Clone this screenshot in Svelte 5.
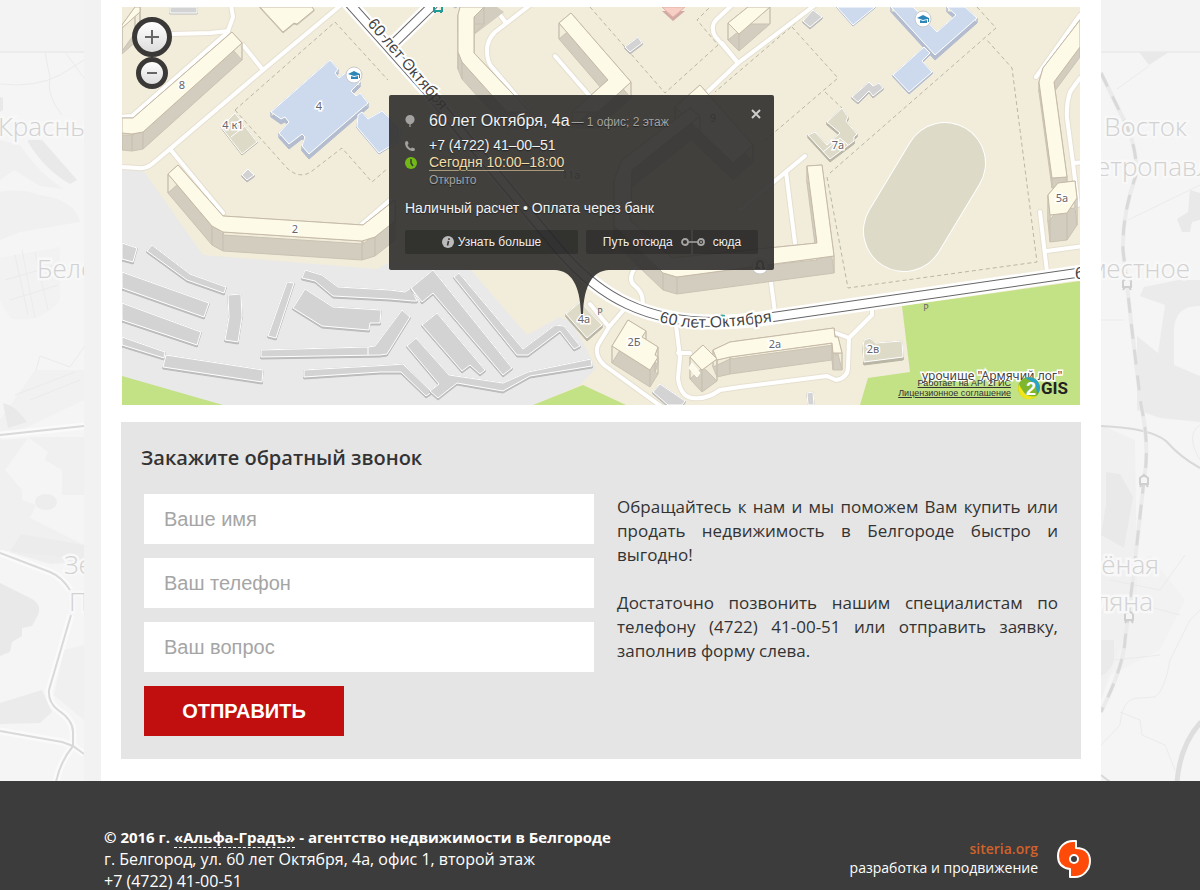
<script lang="ts">
  type Building = { kind: string; h: number; points: string };

  let name = '';
  let phone = '';
  let question = '';
  let cardOpen = true;

  const buildings: Building[] = [
    { kind: 'house', h: 26, points: '122,25 135,7 140,7 140,12 122,28' },
    { kind: 'house', h: 17, points: '232,32 242,43 143,132 132,134 122,133 122,118 133,118' },
    { kind: 'house', h: 1, points: '260,7 283,32 294,23 297,24 314,10 312,7' },
    { kind: 'house', h: 19, points: '178,165 223,216 363,225 395,200 395,221 375,237 362,241 223,232 212,226 168,174' },
    { kind: 'house', h: 17, points: '460,7 458,15 458,52 462,62 507,112 530,112 474,53 474,17 484,7' },
    { kind: 'house', h: 16, points: '571,13 631,82 598,112 572,112 608,80 559,23' },
    { kind: 'house', h: 17, points: '728,23 739,34 770,7 748,7' },
    { kind: 'house', h: 17, points: '700,85 753,145 733,163 675,107' },
    { kind: 'house', h: 17, points: '822,165 834,256 677,277 663,273 614,226 614,180 622,160 690,108 700,116 632,170 630,220 672,258 817,243 807,166' },
    { kind: 'house', h: 10, points: '1080,20 1043,68 1039,82 1052,178 1067,177 1054,82 1080,47' },
    { kind: 'house', h: 27, points: '1058,183 1075,181 1077,198 1067,213 1050,215 1048,195' },
    { kind: 'house', h: 17, points: '628,320 646,331 642,337 658,347 655,355 658,357 650,370 612,346' },
    { kind: 'house', h: 17, points: '713,350 730,342 834,328 835,337 838,337 842,353 833,353 832,343 730,357 717,360' },
    { kind: 'house', h: 22, points: '703,345 717,359 702,370 690,357' },
    { kind: 'school', h: 5, points: '330,60 338,69 335,73 339,78 348,71 360,82 351,91 356,96 360,93 368,103 309,154 302,146 305,137 302,134 289,144 279,133 289,122 285,117 281,119 271,112' },
    { kind: 'school', h: 1, points: '358,115 362,112 368,119 382,111 400,128 400,140 379,153 357,127' },
    { kind: 'school', h: 5, points: '891,7 935,55 977,18 965,7 947,7 956,15 937,32 913,7' },
    { kind: 'school', h: 2, points: '924,47 930,53 922,61 932,72 909,92 893,75' },
    { kind: 'school', h: 1, points: '837,7 853,25 875,7' },
    { kind: 'clinic', h: 4, points: '662,7 673,17 685,7' },
    { kind: 'annex', h: 1, points: '235,113 257,142 242,154 221,127' },
    { kind: 'annex', h: 3, points: '580,302 602,325 587,338 566,314' },
    { kind: 'annex', h: 3, points: '842,108 848,117 846,121 857,134 854,137 854,141 830,159 808,135 815,132 827,145 840,133 827,122' },
    { kind: 'annex', h: 3, points: '863,347 864,340 870,338 876,343 902,341 903,357 864,362' },
    { kind: 'shed', h: 1, points: '170,7 197,7 197,13 170,13' },
    { kind: 'shed', h: 2, points: '248,169 254,175 247,180 242,175' },
    { kind: 'shed', h: 2, points: '625,47 638,37 642,43 630,52' },
    { kind: 'shed', h: 2, points: '813,10 822,17 810,27 803,21' },
    { kind: 'shed', h: 2, points: '869,82 873,86 879,83 883,88 873,96 869,91 858,102 852,97' },
    { kind: 'shed', h: 2, points: '660,384 685,401 682,405 668,405 653,392' },
    { kind: 'shed', h: 1, points: '807,393 813,392 814,405 808,405' },
    { kind: 'shed', h: 2, points: '122,243 137,248 133,262 122,259' },
    { kind: 'shed', h: 2, points: '152,245 190,274 226,287 224,293 187,280 147,251' },
    { kind: 'shed', h: 2, points: '122,272 209,303 204,317 122,288' },
    { kind: 'shed', h: 2, points: '122,303 201,332 197,345 122,320' },
    { kind: 'shed', h: 2, points: '122,337 165,352 164,358 122,345' },
    { kind: 'shed', h: 2, points: '166,355 263,370 262,382 163,367' },
    { kind: 'shed', h: 2, points: '228,295 241,294 242,317 238,342 225,340 229,317' },
    { kind: 'shed', h: 2, points: '287,282 294,283 276,338 268,336' },
    { kind: 'shed', h: 2, points: '305,270 322,275 338,287 390,290 405,292 411,288 417,301 413,301 390,299 333,296 315,281 302,278' },
    { kind: 'shed', h: 2, points: '305,289 333,307 381,310 380,323 370,323 369,330 322,326 293,308' },
    { kind: 'shed', h: 2, points: '261,350 368,347 375,346 402,310 410,317 387,354 380,355 261,357' },
    { kind: 'shed', h: 2, points: '304,370 390,365 403,364 432,392 426,396 401,372 380,372 304,377' },
    { kind: 'shed', h: 2, points: '433,270 512,368 503,375 433,293 422,302 411,288' },
    { kind: 'shed', h: 2, points: '459,273 523,349 555,325 564,326 580,346 574,349 560,331 528,355 517,355 454,277' },
    { kind: 'shed', h: 2, points: '437,313 485,370 480,374 470,365 462,371 422,325' },
    { kind: 'shed', h: 2, points: '416,338 449,375 503,383 528,372 591,359 592,366 530,376 503,391 457,383 438,398 430,391 439,384 407,346' },
  ];

  const lanes = [
    'M341 5 L263 70 L170 149 L152 164 Q146 169 138 168 L120 167',
    'M243 45 L263 70',
    'M172 34 L210 33 L228 31 L233 17 L231 5',
    'M228 32 L132 116 L120 117',
    'M170 149 L223 213 M361 225 L390 200',
    'M530 5 L495 32 Q487 40 487 50 Q487 61 491 66 L530 112',
    'M495 8 L506 23',
    'M555 56 L600 108',
    'M732 5 L716 20 Q710 27 715 36 L738 63',
    'M700 99 L738 63 L815 5',
    'M722 43 L738 63',
    'M805 156 L740 210 M786 172 L795 243',
    'M770 275 L775 313',
    'M635 268 Q627 280 635 286 Q645 294 642 307',
    'M590 304 L609 327 M627 306 L609 327 L598 345 Q594 355 604 365 L662 407',
    'M676 325 L680 357 L678 378 Q680 396 692 398 Q706 400 720 390 L740 387 L827 376 L836 380 Q848 378 848 367 L849 338 L872 315 L872 306',
    'M836 333 L849 338 M678 353 L690 353',
    'M1080 78 L1070 92 Q1066 104 1067 118 L1073 163 L1078 205 M1074 163 L1084 162',
    'M1036 77 L1080 15',
    'M1040 212 L1047 272 M1047 251 L1084 246',
  ];

  const fences = [
    'M235 110 L335 22 L388 80',
    'M235 110 L287 168 Q300 180 312 171 L342 148 L372 182 L388 168',
    'M590 7 L665 93 L718 45 L697 20 L710 7',
    'M812 9 L715 92',
    'M792 27 L838 78 L762 143 M825 92 L842 108',
    'M977 7 L996 28 L830 173',
    'M827 177 L848 288 L1037 262 L1012 68 L986 39',
  ];

  const labels = [
    { text: '8', x: 182, y: 89 },
    { text: '4', x: 319, y: 110 },
    { text: '4 к1', x: 233, y: 129 },
    { text: '2', x: 295, y: 233 },
    { text: '11а', x: 571, y: 179 },
    { text: '9', x: 713, y: 122 },
    { text: '4а', x: 584, y: 323 },
    { text: '2Б', x: 634, y: 346 },
    { text: '2а', x: 775, y: 348 },
    { text: '2в', x: 873, y: 353 },
    { text: '7а', x: 838, y: 149 },
    { text: '5а', x: 1062, y: 202 },
  ];

  const mainRoad =
    'M348 2 L430 94 L556 246 Q590 287 627 304 Q665 322 715 322 Q745 322 773 317 L1090 271';

  // one quad per roof edge, dropped down by the building height
  function walls(points: string, h: number) {
    const p = points.split(' ').map((s) => s.split(',').map(Number));
    return p
      .map(([x, y], i) => {
        const [nx, ny] = p[(i + 1) % p.length];
        return `M${x} ${y}L${nx} ${ny}L${nx} ${ny + h}L${x} ${y + h}Z`;
      })
      .join('');
  }

  function handleSubmit(e: Event) {
    e.preventDefault();
    name = phone = question = '';
  }
</script>

<div class="page">
  <svg class="backdrop" viewBox="0 0 1200 781" preserveAspectRatio="xMidYMin slice" aria-hidden="true">
    <rect y="52" width="1200" height="729" fill="#f5f5f5" />
    <path d="M0 52H1200" stroke="#ececec" stroke-width="2" />
    <g fill="#f0f0f0">
      <path d="M0 140 L20 145 Q40 175 64 189 L40 186 L14 170 L0 180Z" />
      <path d="M0 192 Q20 188 40 195 Q75 200 80 222 L20 232 L0 240Z" />
      <path d="M0 258 L60 247 L60 300 Q40 325 10 318 L0 300Z" opacity=".6" />
      <path d="M35 370 H84 V400 L0 440 V420Z" opacity=".7" />
      <path d="M0 440 L28 438 L5 470 L22 490 L22 500 L36 505 L30 518 L84 545 V560 L0 550Z" />
      <path d="M28 437 H84 V495 H62 V470 L45 460 L48 452Z" />
      <path d="M64 650 L84 645 V720 L54 695Z" />
      <path d="M1101 425 L1135 440 L1137 600 L1101 700Z" />
      <path d="M1101 600 L1150 555 L1185 600 L1160 650 L1101 680Z" opacity=".6" />
    </g>
    <g fill="#e9e9e9">
      <path d="M28 140 L42 140 L77 180 L70 184 Q45 170 28 142Z" />
      <path d="M0 97 L3 98 V110 L0 112Z" />
      <path d="M3 403 Q15 405 27 422 L8 428Z" />
      <path d="M10 552 L21 534 L84 545 V562 L50 564Z" opacity=".6" />
      <ellipse cx="46" cy="502" rx="11" ry="8" opacity=".7" />
      <path d="M0 583 L32 599 Q42 605 38 615 L32 626 L22 628 L22 636 L12 642 L10 652 L0 656Z" />
      <path d="M0 703 L42 690 L52 712 L40 723 L0 724Z" opacity=".8" />
      <path d="M1139 52 H1169 L1149 65Z" />
      <path d="M1190 190 L1200 193 V220 L1192 222 L1190 232 L1182 232 L1177 219 L1188 212Z" />
      <path d="M1144 287 L1178 280 H1200 V306 Q1175 305 1174 330 V365 L1200 376 V422 L1160 418 L1137 410 L1137 336 L1158 353 L1165 305 L1140 296Z" opacity=".8" />
      <path d="M1106 472 L1120 474 L1133 497 L1124 548 L1101 535 L1106 505Z" />
      <path d="M1101 640 H1114 V660 Q1110 672 1101 676Z" opacity=".8" />
    </g>
    <g fill="none" stroke="#ebebeb">
      <path d="M45 52 L50 78 Q46 95 62 115 M0 84 Q35 88 60 75 L84 60 M65 52 L84 78" />
      <path d="M15 255 L28 315 M35 252 L48 310 M5 280 L60 264 M10 300 L58 285 M22 250 L35 318" />
      <path d="M36 370 L40 356 L70 367 L84 347 M15 395 L75 372 M30 400 L80 380" />
      <path d="M1117 89 L1149 66 M1128 220 L1200 185 M1101 320 H1125 M1200 425 Q1185 435 1200 460" />
      <path d="M1101 745 L1120 725 Q1122 697 1140 698 L1155 697 Q1165 690 1170 660 L1190 620 L1200 610" />
      <path d="M1115 660 L1160 655 M1110 580 L1160 590 L1185 555 M1125 600 L1180 615 M1120 712 L1140 720 L1142 735 L1165 745 L1175 770" />
    </g>
    <g fill="none" stroke="#fafafa" stroke-width="7">
      <path d="M0 435 L84 426 M0 553 L50 572 Q62 577 70 590 M71 615 L49 690 Q48 702 58 710 Q73 720 73 732 V746 M0 731 L62 742 L73 746 L84 754 M73 746 Q60 762 56 782" />
    </g>
    <g fill="none" stroke="#d9d9d9" stroke-width="2">
      <path d="M0 435 L84 426 M0 553 L50 572 Q62 577 70 590 M71 615 L49 690 Q48 702 58 710 Q73 720 73 732 V746 M0 731 L62 742 L73 746 L84 754 M73 746 Q60 762 56 782" />
      <path d="M1101 426 Q1150 428 1166 441 Q1180 457 1200 468 M1101 775 L1110 782" />
    </g>
    <path d="M1201 722 Q1180 745 1177 782" fill="none" stroke="#dedede" stroke-width="5" />
    <path class="rail" d="M1101 73 L1120 112 Q1138 145 1136 175 Q1122 215 1123 250 L1127 285 L1132 330 L1141 405 Q1150 445 1144 480 L1134 570 L1129 610 L1125 640 Q1124 665 1101 712" />
    <path class="rail ties" d="M1101 73 L1120 112 Q1138 145 1136 175 Q1122 215 1123 250 L1127 285 L1132 330 L1141 405 Q1150 445 1144 480 L1134 570 L1129 610 L1125 640 Q1124 665 1101 712" />
    {#each [[1127, 283], [1144, 480], [1129, 616]] as [x, y]}
      <path class="station" d="M{x - 4} {y + 4}V{y - 2}L{x} {y - 5}L{x + 4} {y - 2}V{y + 4}Z M{x - 4} {y + 7}L{x - 2} {y + 4}M{x + 4} {y + 7}L{x + 2} {y + 4}" />
    {/each}
    <g class="places">
      <text x="-2" y="136">Красный</text>
      <text x="37" y="278">Бело</text>
      <text x="64" y="574">Зел</text>
      <text x="69" y="611">По</text>
      <text x="1187" y="136" text-anchor="end">Восток</text>
      <text x="1096" y="176">етропавл</text>
      <text x="1190" y="278" text-anchor="end">местное</text>
      <text x="1159" y="574" text-anchor="end">ёная</text>
      <text x="1153" y="611" text-anchor="end">ляна</text>
    </g>
    <rect x="84" width="20" height="781" fill="#f2f2f2" />
  </svg>

  <main>
    <section class="map">
      <svg class="tiles" viewBox="122 7 958 398" preserveAspectRatio="xMidYMid slice" role="img" aria-label="Карта">
        <rect x="122" y="7" width="958" height="398" fill="#f2ecda" />
        <path fill="#e9e9e9" d="M122 170 L143 170 L203 255 L377 269 L390 262 L470 269 L527 335 L560 317 L571 322 L582 340 L596 368 L580 385 L533 405 H122Z" />
        <path fill="#c3e185" d="M122 376 L223 405 H122Z M533 405 L583 385 L626 405Z M902 306 L1080 281 V405 H860 L868 378 L910 372Z" />

        {#each fences as d}
          <path class="fence" {d} />
        {/each}
        {#each lanes as d}
          <path class="lane edge" {d} />
        {/each}
        {#each lanes as d}
          <path class="lane" {d} />
        {/each}

        <path class="road" d="M394 43 L434 4" />
        <path class="road" d={mainRoad} />
        <path class="curb" d="M394 43 L434 4" />
        <path class="curb" d={mainRoad} />
        <path class="surface" d="M394 43 L434 4" />
        <path class="surface" d={mainRoad} />

        <path d="M945 163 L904 231" stroke="#fff" stroke-width="82" stroke-linecap="round" />
        <path d="M945 163 L904 231" stroke="#dddac8" stroke-width="80" stroke-linecap="round" />
        <path fill="#d2cdbf" d="M474 35 L504 12 L497 7 H484 L474 17Z" />

        {#each buildings as b}
          <g class={b.kind}>
            <path class="wall" d={walls(b.points, b.h)} />
            <polygon class="roof" points={b.points} />
          </g>
        {/each}
        <g fill="none" stroke="#fff">
          <path d="M231 137 L245 126 M411 288 L420 302 M368 347 V355 M823 152 L840 138 L848 145" />
        </g>
        <path fill="#fdfbe8" stroke="#fff" d="M692 363 L700 373 L697 377 L689 368Z" />

        {#each [[354, 75], [923, 19]] as [x, y]}
          <circle cx={x} cy={y} r="8" fill="#fff" stroke="#c9c9c9" />
          <path fill="#2d86b8" d="M{x - 6} {y - 1}L{x} {y - 4}L{x + 6} {y - 1}V{y + 3}H{x + 5}V{y}L{x} {y + 1}Z M{x - 3} {y + 1}L{x} {y + 2}L{x + 4} {y + 1}V{y + 4}H{x - 3}Z" />
        {/each}
        <circle cx="760" cy="266" r="8" fill="#fff" stroke="#c9c9c9" />
        <path d="M757 268 V264 A3 3 0 0 1 763 264 V268 H765 M755 268 H760" fill="none" stroke="#666" stroke-width="2" />
        <path d="M434 5 V11 H442 V5 M434 12 H436 M440 12 H442" fill="none" stroke="#239a96" stroke-width="2" />
        <path d="M716 318 Q720 313 725 315 V318Z" fill="#3aa6a3" />
        <path d="M452 5 Q455 11 458 6Z" fill="#b9bcc4" />

        <g class="labels">
          {#each labels as l}
            <text x={l.x} y={l.y}>{l.text}</text>
          {/each}
          <text class="parking" x="600" y="315">P</text>
          <text class="parking" x="926" y="311">P</text>
        </g>
        <path id="street-a" fill="none" d="M367 24 L460 133" />
        <path id="street-b" fill="none" d="M659 322 Q690 330 720 327 Q745 326 790 319" />
        <text class="street"><textPath href="#street-a">60 лет Октября</textPath></text>
        <text class="street"><textPath href="#street-b">60 лет Октября</textPath></text>
        <text class="street" x="1075" y="279">60</text>
        <text class="tract" x="922" y="380">урочище "Армячий лог"</text>
      </svg>

      <div class="zoom">
        <button class="zoom-in" aria-label="Приблизить">
          <svg viewBox="0 0 16 16" width="16" height="16"><path d="M1 8H15M8 1V15" stroke="#666" stroke-width="2" /></svg>
        </button>
        <button class="zoom-out" aria-label="Отдалить">
          <svg viewBox="0 0 12 12" width="12" height="12"><path d="M1 6H11" stroke="#666" stroke-width="2" /></svg>
        </button>
      </div>

      {#if cardOpen}
        <div class="card">
          <button class="close" aria-label="Закрыть" on:click={() => (cardOpen = false)}>
            <svg viewBox="0 0 10 10" width="10" height="10"><path d="M1 1L9 9M9 1L1 9" stroke="#ccc" stroke-width="2" /></svg>
          </button>
          <div class="row title">
            <svg viewBox="0 0 10 12" width="10" height="12"><path fill="#a3a2a1" d="M5 0A4.600 4.600 0 0 1 9.600 4.600C9.600 7 7.500 9 5.600 9.300V12H4.400V9.300C2.500 9 .4 7 .4 4.600A4.600 4.600 0 0 1 5 0Z" /></svg>
            <div><b>60 лет Октября, 4а</b> <span>— 1 офис; 2 этаж</span></div>
          </div>
          <div class="row">
            <svg viewBox="0 0 10 10" width="10" height="10"><path fill="#a3a2a1" d="M1 0L3 .5L3.500 3L2.500 4C3 5.500 4.500 7 6 7.500L7 6.500L9.500 7.200L10 9Q9 10.200 7 10Q.5 8.500 0 2.500Q0 1 1 0Z" /></svg>
            <div>+7 (4722) 41–00–51</div>
          </div>
          <div class="row">
            <svg viewBox="0 0 12 12" width="12" height="12"><circle cx="6" cy="6" r="6" fill="#72b816" /><path d="M6 2V6L8 9" fill="none" stroke="#3a3a38" stroke-width="1.500" /></svg>
            <a class="hours" href="#hours">Сегодня 10:00–18:00</a>
          </div>
          <div class="status">Открыто</div>
          <div class="payment">Наличный расчет • Оплата через банк</div>
          <div class="actions">
            <button class="more">
              <svg viewBox="0 0 12 12" width="12" height="12"><circle cx="6" cy="6" r="6" fill="#bbb" /><path d="M7 2.200V4M6.500 5L5.500 9.500" stroke="#383736" stroke-width="1.600" /></svg>
              Узнать больше
            </button>
            <div class="route">
              <button>Путь отсюда</button>
              <svg viewBox="0 0 24 8" width="24" height="8"><path d="M7 4H17" stroke="#a5a4a3" stroke-width="1.500" /><circle cx="4" cy="4" r="3" fill="none" stroke="#a5a4a3" stroke-width="1.800" /><circle cx="20" cy="4" r="3" fill="none" stroke="#a5a4a3" stroke-width="1.800" /><circle cx="20" cy="4" r="1" fill="#a5a4a3" /></svg>
              <button>сюда</button>
            </div>
          </div>
          <svg class="tip" viewBox="0 0 54 52" width="54" height="52"><path d="M0 0H54C38 1 29 14 28 44H26C25 14 16 1 0 0Z" /></svg>
        </div>
      {/if}

      <div class="copyright">
        <div class="terms">
          <a href="#api">Работает на API 2ГИС</a>
          <a href="#license">Лицензионное соглашение</a>
        </div>
        <svg viewBox="0 0 24 24" width="24" height="24">
          <circle cx="12" cy="12" r="11" fill="#7fb62c" />
          <path d="M2 8A11 11 0 0 0 20 20Q10 22 6 15Q3 11 2 8Z" fill="#eee51c" />
          <path d="M8 2A11 11 0 0 1 23 12Q22 17 20 19Q21 7 8 2Z" fill="#2aa4c4" />
          <text x="9" y="19">2</text>
        </svg>
        <span class="gis">GIS</span>
      </div>
    </section>

    <section class="callback">
      <h2>Закажите обратный звонок</h2>
      <div class="columns">
        <form on:submit={handleSubmit}>
          <input type="text" placeholder="Ваше имя" aria-label="Ваше имя" bind:value={name} />
          <input type="tel" placeholder="Ваш телефон" aria-label="Ваш телефон" bind:value={phone} />
          <input type="text" placeholder="Ваш вопрос" aria-label="Ваш вопрос" bind:value={question} />
          <button class="send" type="submit">ОТПРАВИТЬ</button>
        </form>
        <div class="about">
          <p>Обращайтесь к нам и мы поможем Вам купить или продать недвижимость в Белгороде быстро и выгодно!</p>
          <p>Достаточно позвонить нашим специалистам по телефону (4722) 41-00-51 или отправить заявку, заполнив форму слева.</p>
        </div>
      </div>
    </section>
  </main>
</div>

<footer>
  <div class="footer-inner">
    <div class="contacts">
      <strong>© 2016 г. <span class="brand">«Альфа-Градъ»</span> - агентство недвижимости в Белгороде</strong><br />
      г. Белгород, ул. 60 лет Октября, 4а, офис 1, второй этаж<br />
      +7 (4722) 41-00-51
    </div>
    <div class="dev">
      <div>
        <a href="#siteria">siteria.org</a><br />
        разработка и продвижение
      </div>
      <svg viewBox="0 0 36 40" width="36" height="40">
        <path d="M20 2V9C29 9 34 14 34 22C34 31 27 38 19 38H14V30C6 29 2 24 2 17C2 8 9 2 17 2Z" fill="#ff4b0a" stroke="#fff" stroke-width="2" stroke-linejoin="round" />
        <circle cx="18" cy="20" r="4" fill="#3c3c3c" stroke="#fff" stroke-width="2" />
      </svg>
    </div>
  </div>
</footer>

<style>
  :global(body) {
    background: #3c3c3c;
  }

  .page,
  footer {
    font-family: 'Open Sans', 'Noto Sans', sans-serif;
  }

  .page {
    position: relative;
    background: #f3f3f3;
    padding-left: 2px;
    overflow: hidden;
  }

  .backdrop {
    position: absolute;
    inset: 0;
    width: 100%;
    height: 100%;
  }

  .rail {
    fill: none;
    stroke: #ebebeb;
    stroke-width: 4;
  }

  .rail.ties {
    stroke: #d9d9d9;
    stroke-width: 3;
    stroke-dasharray: 15 11;
  }

  .station {
    fill: #f5f5f5;
    stroke: #cfcfcf;
    stroke-width: 2;
  }

  .places text {
    font-size: 26px;
    font-weight: 300;
    fill: #d2d2d2;
    stroke: #f8f8f8;
    stroke-width: 5px;
    paint-order: stroke;
  }

  main {
    position: relative;
    box-sizing: border-box;
    max-width: 1000px;
    margin: 0 auto;
    padding: 7px 20px 22px;
    background: #fff;
  }

  /* Map */
  .map {
    position: relative;
    height: 398px;
    margin: 0 1px 17px;
    overflow: hidden;
    font-family: 'Liberation Sans', Arial, sans-serif;
  }

  .tiles {
    display: block;
    width: 100%;
    height: 100%;
  }

  .fence {
    fill: none;
    stroke: #b9b7a4;
    stroke-dasharray: 4 3;
  }

  .lane {
    fill: none;
    stroke: #fff;
    stroke-width: 4;
    stroke-linecap: round;
    stroke-linejoin: round;
  }

  .lane.edge {
    stroke: #e6e0d0;
    stroke-width: 6;
  }

  .road,
  .curb,
  .surface {
    fill: none;
    stroke: #fff;
    stroke-width: 15;
  }

  .curb {
    stroke: #666;
    stroke-width: 10;
  }

  .surface {
    stroke-width: 8;
  }

  .house .wall {
    fill: #d2cdbf;
    stroke: #cac3b4;
  }

  .house .roof {
    fill: #fdfbe8;
    stroke: #c6b9a7;
  }

  .school .wall {
    fill: #b3bdcf;
    stroke: #b3bdcf;
  }

  .school .roof {
    fill: #cddaee;
    stroke: #fff;
  }

  .clinic .wall {
    fill: #d3a9a4;
  }

  .clinic .roof {
    fill: #f7cfc5;
    stroke: #e5b4ab;
  }

  .annex .wall {
    fill: #bab6a6;
    stroke: #bab6a6;
  }

  .annex .roof {
    fill: #dddac8;
    stroke: #fff;
  }

  .shed .wall {
    fill: #bcbcbc;
    stroke: #bcbcbc;
  }

  .shed .roof {
    fill: #d3d3d3;
    stroke: #fff;
  }

  .labels text {
    font: 11px 'Noto Sans', sans-serif;
    text-anchor: middle;
    fill: #66666b;
    stroke: #fff;
    stroke-width: 3px;
    paint-order: stroke;
  }

  .labels .parking {
    font-size: 9px;
    stroke-width: 0;
  }

  .street {
    font-size: 16px;
    fill: #444;
    stroke: #fff;
    stroke-width: 4px;
    paint-order: stroke;
  }

  .tract {
    font: 12px 'Noto Sans', sans-serif;
    fill: #444;
    stroke: #fff;
    stroke-width: 3px;
    paint-order: stroke;
  }

  .zoom {
    position: absolute;
    top: 10px;
    left: 10px;
    display: flex;
    flex-direction: column;
    align-items: center;
  }

  .zoom button {
    display: flex;
    align-items: center;
    justify-content: center;
    padding: 0;
    border: 5px solid #3b3937;
    border-radius: 50%;
    background: linear-gradient(#fff, #ddd) padding-box;
    cursor: pointer;
  }

  .zoom .zoom-in {
    width: 40px;
    height: 40px;
  }

  .zoom .zoom-out {
    width: 32px;
    height: 32px;
  }

  /* Firm card over the map */
  .card {
    position: absolute;
    top: 88px;
    left: calc(50% - 212px);
    box-sizing: border-box;
    width: 385px;
    padding: 16px;
    border-radius: 2px;
    background: rgba(50, 49, 48, 0.92);
    color: #f2f2f2;
    font-size: 14px;
    line-height: 17px;
    text-shadow: 0 1px 1px #222;
  }

  .row {
    display: grid;
    grid-template-columns: 24px 1fr;
    align-items: center;
  }

  .row.title {
    height: 20px;
    margin-bottom: 6px;
  }

  .title b {
    font-size: 16px;
    font-weight: 400;
  }

  .title span,
  .status {
    color: #a3a2a1;
    font-size: 12px;
  }

  .title span {
    margin-left: -2px;
  }

  .hours {
    justify-self: start;
    color: #f4dca6;
    line-height: 16px;
    text-decoration: none;
    border-bottom: 1px solid #a8997a;
  }

  .status {
    padding: 1px 0 0 24px;
  }

  .payment {
    margin: 11px 0 13px;
  }

  .card button {
    padding: 0;
    border: 0;
    background: none;
    color: #eee;
    font: 12px 'Liberation Sans', Arial, sans-serif;
    text-shadow: inherit;
    cursor: pointer;
  }

  .card .close {
    position: absolute;
    top: 14px;
    right: 13px;
    line-height: 10px;
  }

  .actions {
    display: grid;
    grid-template-columns: 173px 172px;
    gap: 8px;
    height: 24px;
  }

  .card .more,
  .route {
    display: flex;
    align-items: center;
    justify-content: center;
    gap: 4px;
    border-radius: 2px;
    background: rgba(0, 0, 0, 0.22);
  }

  .route {
    gap: 8px;
    background: linear-gradient(90deg, rgba(0, 0, 0, 0.22) 105px, transparent 105px, transparent 107px, rgba(0, 0, 0, 0.22) 107px);
  }

  .tip {
    position: absolute;
    top: 100%;
    left: 166px;
    fill: rgba(50, 49, 48, 0.92);
  }

  .copyright {
    position: absolute;
    right: 12px;
    bottom: 5px;
    display: flex;
    align-items: center;
  }

  .terms {
    display: flex;
    flex-direction: column;
    align-items: flex-end;
    margin-right: 6px;
  }

  .terms a {
    color: #333;
    font-size: 9px;
    line-height: 10px;
  }

  .copyright svg text {
    font-size: 18px;
    font-weight: 700;
    fill: #fff;
  }

  .gis {
    color: #222;
    font: 700 17px/24px Roboto, sans-serif;
  }

  /* Callback form */
  .callback {
    padding: 20px 23px 23px;
    background: #e5e5e5;
    color: #333;
  }

  h2 {
    margin: 0 0 20px -3px;
    font-size: 20px;
    font-weight: 600;
    line-height: 32px;
  }

  .columns {
    display: grid;
    grid-template-columns: 450px 1fr;
    gap: 23px;
  }

  form {
    display: flex;
    flex-direction: column;
    align-items: flex-start;
    gap: 14px;
  }

  form input {
    box-sizing: border-box;
    width: 100%;
    height: 50px;
    padding: 0 20px;
    border: 0;
    background: #fff;
    color: #333;
    font: 20px 'Liberation Sans', Arial, sans-serif;
  }

  form input::placeholder {
    color: #a5a5a5;
  }

  .send {
    width: 200px;
    height: 50px;
    border: 0;
    background: #c10f0f;
    color: #fff;
    font: 700 20px 'Liberation Sans', Arial, sans-serif;
    cursor: pointer;
  }

  .about {
    font-size: 17px;
    line-height: 24px;
    text-align: justify;
  }

  .about p {
    margin: 1px 0 24px;
  }

  /* Footer */
  footer {
    box-sizing: border-box;
    height: 109px;
    padding-top: 45px;
    overflow: hidden;
    background: #3c3c3c;
    color: #fff;
  }

  .footer-inner {
    display: flex;
    justify-content: space-between;
    max-width: 992px;
    margin: 0 auto;
  }

  .contacts {
    font-size: 16px;
    line-height: 22px;
  }

  .contacts strong {
    font-size: 15px;
  }

  .brand {
    border-bottom: 1px dashed #fff;
  }

  .dev {
    display: flex;
    gap: 18px;
    padding: 13px 4px 0 0;
    font-size: 14px;
    line-height: 19px;
    text-align: right;
  }

  .dev a {
    color: #d0622b;
    font-weight: 600;
    text-decoration: none;
  }
</style>
